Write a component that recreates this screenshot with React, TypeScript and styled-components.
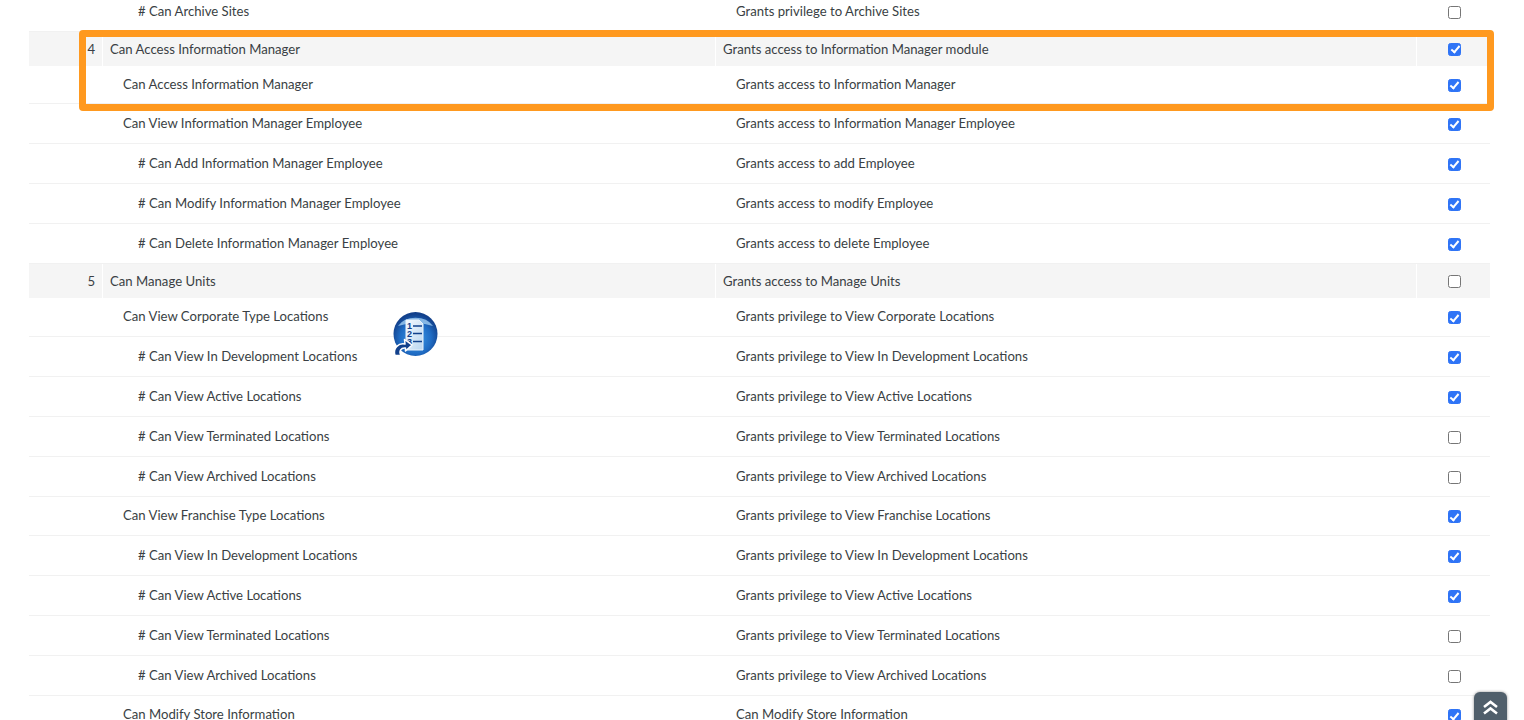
import React from "react";
import styled, { createGlobalStyle } from "styled-components";

const GlobalStyle = createGlobalStyle`
    html, body {
        margin: 0;
        padding: 0;
        height: 100%;
        background: #fff;
        overflow: hidden;
    }
`;

const Page = styled.div`
    position: relative;
    width: 1524px;
    height: 720px;
    overflow: hidden;
    font-family: Lato, "Noto Sans", "Liberation Sans", sans-serif;
    font-size: 13.15px;
    color: #3a3f44;
`;

const Table = styled.div`
    display: flex;
    flex-direction: column;
    width: 1461px;
    margin: -8px 0 0 29px;
`;

const Row = styled.div<{ $height: number; $section?: boolean }>`
    display: grid;
    grid-template-columns: 74px 612px 701px 74px;
    height: ${(p) => p.$height}px;
    box-sizing: border-box;
    background: ${(p) => (p.$section ? "#f5f5f5" : "transparent")};
    border-bottom: ${(p) => (p.$section ? "none" : "1px solid #f1f1f1")};
`;

const Cell = styled.div<{ $indent: number; $lift?: number; $section?: boolean }>`
    display: flex;
    align-items: center;
    min-width: 0;
    white-space: nowrap;
    padding-left: ${(p) => p.$indent}px;
    padding-bottom: ${(p) => p.$lift ?? 0}px;
    border-left: ${(p) => (p.$section ? "1px solid #fff" : "none")};
`;

const NumberCell = styled.div`
    display: flex;
    align-items: center;
    justify-content: flex-end;
    padding-right: 7px;
    border-right: 1px solid #fff;
`;

const CheckCell = styled.div<{ $section?: boolean }>`
    display: flex;
    align-items: center;
    justify-content: center;
    padding-left: 2px;
    padding-top: ${(p) => (p.$section ? 0 : 1)}px;
    border-left: ${(p) => (p.$section ? "1px solid #fff" : "none")};
`;

const Check = styled.input.attrs({ type: "checkbox", readOnly: true })`
    appearance: none;
    position: relative;
    width: 13px;
    height: 13px;
    margin: 0;
    box-sizing: border-box;
    border: 1px solid #767676;
    border-radius: 2.5px;
    background: #fff;

    &:checked {
        border-color: #2f74f6;
        background: #2f74f6;
    }

    &:checked::after {
        content: "";
        position: absolute;
        left: 3.5px;
        top: 0.5px;
        width: 3px;
        height: 7px;
        border: solid #fff;
        border-width: 0 2px 2px 0;
        transform: rotate(40deg);
    }
`;

const Highlight = styled.div`
    position: absolute;
    left: 79px;
    top: 30px;
    width: 1415px;
    height: 81px;
    box-sizing: border-box;
    border: 7px solid #ff991f;
    border-radius: 4px;
`;

const FloatingIcon = styled.svg`
    position: absolute;
    left: 392px;
    top: 311px;
`;

const BackToTop = styled.button`
    position: absolute;
    left: 1474px;
    top: 692px;
    width: 33px;
    height: 34px;
    padding: 8px 0 0;
    border: none;
    border-radius: 6px;
    background: #505f6b;
    box-shadow: 0 0 3px rgba(0, 0, 0, 0.45);
    display: flex;
    justify-content: center;
    align-items: flex-start;
`;

type Perm = { name: string; desc: string; level: 1 | 2; on: boolean; height: number };
type Section = { num: string; name: string; desc: string; on: boolean };
type Item = Perm | Section;

const isSection = (i: Item): i is Section => "num" in i;

const items: Item[] = [
    { name: "# Can Archive Sites", desc: "Grants privilege to Archive Sites", level: 2, on: false, height: 40 },
    { num: "4", name: "Can Access Information Manager", desc: "Grants access to Information Manager module", on: true },
    { name: "Can Access Information Manager", desc: "Grants access to Information Manager", level: 1, on: true, height: 38 },
    { name: "Can View Information Manager Employee", desc: "Grants access to Information Manager Employee", level: 1, on: true, height: 40 },
    { name: "# Can Add Information Manager Employee", desc: "Grants access to add Employee", level: 2, on: true, height: 40 },
    { name: "# Can Modify Information Manager Employee", desc: "Grants access to modify Employee", level: 2, on: true, height: 40 },
    { name: "# Can Delete Information Manager Employee", desc: "Grants access to delete Employee", level: 2, on: true, height: 40 },
    { num: "5", name: "Can Manage Units", desc: "Grants access to Manage Units", on: false },
    { name: "Can View Corporate Type Locations", desc: "Grants privilege to View Corporate Locations", level: 1, on: true, height: 39 },
    { name: "# Can View In Development Locations", desc: "Grants privilege to View In Development Locations", level: 2, on: true, height: 40 },
    { name: "# Can View Active Locations", desc: "Grants privilege to View Active Locations", level: 2, on: true, height: 40 },
    { name: "# Can View Terminated Locations", desc: "Grants privilege to View Terminated Locations", level: 2, on: false, height: 40 },
    { name: "# Can View Archived Locations", desc: "Grants privilege to View Archived Locations", level: 2, on: false, height: 40 },
    { name: "Can View Franchise Type Locations", desc: "Grants privilege to View Franchise Locations", level: 1, on: true, height: 39 },
    { name: "# Can View In Development Locations", desc: "Grants privilege to View In Development Locations", level: 2, on: true, height: 40 },
    { name: "# Can View Active Locations", desc: "Grants privilege to View Active Locations", level: 2, on: true, height: 40 },
    { name: "# Can View Terminated Locations", desc: "Grants privilege to View Terminated Locations", level: 2, on: false, height: 40 },
    { name: "# Can View Archived Locations", desc: "Grants privilege to View Archived Locations", level: 2, on: false, height: 40 },
    { name: "Can Modify Store Information", desc: "Can Modify Store Information", level: 1, on: true, height: 39 },
];

const ListIcon = () => (
    <FloatingIcon width="46" height="48" viewBox="0 0 46 48">
        <defs>
            <radialGradient id="orb" cx="50%" cy="60%" r="55%">
                <stop offset="0%" stopColor="#3f9be8" />
                <stop offset="65%" stopColor="#1f6cc4" />
                <stop offset="100%" stopColor="#12418c" />
            </radialGradient>
            <linearGradient id="sheet" x1="0" y1="0" x2="1" y2="1">
                <stop offset="0%" stopColor="#f4f9fe" />
                <stop offset="100%" stopColor="#b9d6f0" />
            </linearGradient>
        </defs>
        <circle cx="23.5" cy="23" r="22" fill="url(#orb)" />
        <path d="M6 15 A20 16 0 0 1 41 15 A28 12 0 0 0 6 15Z" fill="#a9d6f7" opacity="0.75" />
        <path d="M14 9 H27 L31 13 V39 H14Z" fill="url(#sheet)" stroke="#e8f3fc" strokeWidth="1" />
        <text x="15" y="18" fontFamily="Liberation Sans" fontWeight="700" fontSize="9" fill="#12418c">1</text>
        <text x="15" y="26" fontFamily="Liberation Sans" fontWeight="700" fontSize="9" fill="#12418c">2</text>
        <text x="15" y="34" fontFamily="Liberation Sans" fontWeight="700" fontSize="9" fill="#12418c">3</text>
        <path d="M21 15 H30 M21 22.5 H30 M21 30.5 H30" stroke="#12418c" strokeWidth="1.6" />
        <path d="M3 44.5 C0.5 37 7 31.5 13 33 L12.5 28.5 L20 34 L13.5 40 L13.5 37 C9 36.5 6.5 40 9 44.5 Z" fill="#12418c" stroke="#fff" strokeWidth="1.5" strokeLinejoin="round" />
    </FloatingIcon>
);

const App = () => {
    return (
        <Page>
            <GlobalStyle />
            <Table>
                {items.map((item, i) => {
                    if (isSection(item)) {
                        return (
                            <Row key={i} $height={34} $section>
                                <NumberCell>{item.num}</NumberCell>
                                <Cell $indent={7}>{item.name}</Cell>
                                <Cell $indent={7} $section>{item.desc}</Cell>
                                <CheckCell $section><Check checked={item.on} /></CheckCell>
                            </Row>
                        );
                    }
                    const lift = item.height === 39 ? 2 : 1;
                    return (
                        <Row key={i} $height={item.height}>
                            <div />
                            <Cell $indent={item.level === 1 ? 20 : 35} $lift={lift}>{item.name}</Cell>
                            <Cell $indent={21} $lift={lift}>{item.desc}</Cell>
                            <CheckCell><Check checked={item.on} /></CheckCell>
                        </Row>
                    );
                })}
            </Table>
            <Highlight />
            <ListIcon />
            <BackToTop aria-label="Back to top">
                <svg width="15" height="15" viewBox="0 0 15 15" fill="none" stroke="#fff" strokeWidth="2.6">
                    <path d="M1 7 L7.5 2 L14 7" />
                    <path d="M1 13.5 L7.5 8.5 L14 13.5" />
                </svg>
            </BackToTop>
        </Page>
    );
};

export default App;
